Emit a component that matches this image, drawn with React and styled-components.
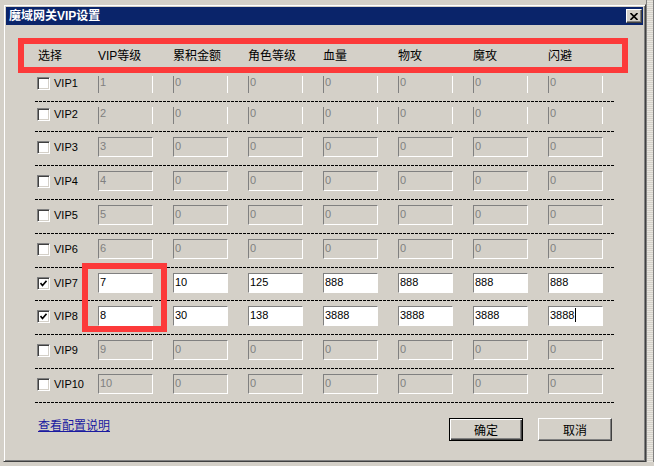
import React from "react";
import styled, { createGlobalStyle } from "styled-components";

const FACE = "#d4d0c8";
const RED = "#fc3a3a";

const GlobalStyle = createGlobalStyle`
  html, body { margin: 0; padding: 0; background: ${FACE}; }
  body {
    font-family: "Liberation Sans", "Noto Sans CJK SC", sans-serif;
    font-size: 12px;
    color: #000;
  }
  * { box-sizing: border-box; }
`;

const Desktop = styled.div`
  width: 654px;
  height: 466px;
  overflow: hidden;
  display: flex;
  align-items: flex-start;
  padding: 4px 0 0 3px;
  background: ${FACE};
`;

const SideStrip = styled.div`
  width: 8px;
  height: 462px;
  margin-top: -4px;
  border-left: 1px solid #808080;
  border-right: 1px solid #808080;
  background: repeating-linear-gradient(0deg, #e8e6e0 0 1px, ${FACE} 1px 2px);
`;

const Window = styled.div`
  width: 643px;
  height: 458px;
  flex: none;
  background: ${FACE};
  border: 1px solid;
  border-color: ${FACE} #404040 #404040 ${FACE};
  box-shadow: inset 1px 1px #fff, inset -1px -1px #808080;
  padding: 2px;
  display: flex;
  flex-direction: column;
`;

const TitleBar = styled.div`
  height: 18px;
  background: #0a246a;
  display: flex;
  align-items: center;
  justify-content: space-between;
  padding: 0 1px 0 3px;
`;

const Title = styled.div`
  color: #fff;
  font-weight: bold;
  font-size: 12px;
  line-height: 18px;
`;

const CloseButton = styled.div`
  width: 16px;
  height: 14px;
  background: ${FACE};
  border: 1px solid;
  border-color: #fff #404040 #404040 #fff;
  box-shadow: inset -1px -1px #808080;
  display: flex;
  align-items: center;
  justify-content: center;
`;

const Body = styled.div`
  flex: 1;
  display: flex;
  flex-direction: column;
  padding-top: 13px;
`;

const HeaderBox = styled.div`
  margin-left: 12px;
  width: 610px;
  height: 35px;
  border: 6px solid ${RED};
  display: grid;
  grid-template-columns: 60px repeat(7, 75px);
  align-items: center;
  padding-left: 14px;
`;

const HeaderCell = styled.div`
  font-size: 12px;
  line-height: 14px;
  white-space: nowrap;
`;

const Rows = styled.div`
  margin-left: 29px;
  width: 579px;
  position: relative;
`;

const Row = styled.div`
  display: grid;
  grid-template-columns: 63px repeat(6, 75px) 66px;
  align-items: start;
  height: ${(p) => p.$h}px;
  padding-top: ${(p) => p.$pad}px;
  background-image: repeating-linear-gradient(90deg, #000 0 3px, transparent 3px 4px);
  background-size: 100% 1px;
  background-position: left bottom;
  background-repeat: no-repeat;
`;

const Choice = styled.div`
  display: flex;
  align-items: center;
  gap: 4px;
  padding-left: 2px;
  height: ${(p) => (p.$compact ? 15 : 20)}px;
`;

const Box = styled.span`
  width: 13px;
  height: 13px;
  flex: none;
  background: #fff;
  border: 1px solid;
  border-color: #808080 #fff #fff #808080;
  box-shadow: inset 1px 1px #404040, inset -1px -1px ${FACE};
  display: flex;
  align-items: center;
  justify-content: center;
`;

const RowLabel = styled.span`
  font-size: 11px;
  line-height: 13px;
`;

const Field = styled.div`
  width: 55px;
  height: ${(p) => (p.$compact ? 17 : 20)}px;
  border-style: solid;
  border-color: #808080 #fff #fff #808080;
  border-width: ${(p) => (p.$compact ? "0 1px" : "1px")};
  background: ${(p) => (p.$enabled ? "#fff" : FACE)};
  color: ${(p) => (p.$enabled ? "#000" : "#808080")};
  font-size: 11px;
  line-height: ${(p) => (p.$compact ? 13 : 17)}px;
  padding-left: 1px;
  white-space: nowrap;
  overflow: hidden;
`;

const Caret = styled.span`
  display: inline-block;
  width: 1px;
  height: 14px;
  background: #000;
  vertical-align: middle;
  margin-left: 1px;
  margin-top: -2px;
`;

const Highlight = styled.div`
  position: absolute;
  left: 47px;
  top: 190px;
  width: 85px;
  height: 69px;
  border: 6px solid ${RED};
  pointer-events: none;
`;

const Footer = styled.div`
  display: flex;
  justify-content: space-between;
  align-items: flex-start;
  margin-top: 15px;
  padding: 0 31px 0 32px;
`;

const LinkText = styled.a`
  color: #1a1aa0;
  text-decoration: underline;
  font-size: 12px;
  line-height: 14px;
  margin-top: 1px;
  cursor: pointer;
`;

const Buttons = styled.div`
  display: flex;
  gap: 15px;
`;

const Button = styled.div`
  width: 74px;
  height: 23px;
  background: ${FACE};
  display: flex;
  align-items: center;
  justify-content: center;
  font-size: 12px;
  border: 1px solid;
  border-color: ${(p) => (p.$default ? "#000" : "#fff #404040 #404040 #fff")};
  box-shadow: ${(p) =>
    p.$default
      ? "inset 1px 1px #fff, inset -1px -1px #404040, inset -2px -2px #808080"
      : `inset -1px -1px #808080, inset 1px 1px ${FACE}`};
`;

const headers = ["选择", "VIP等级", "累积金额", "角色等级", "血量", "物攻", "魔攻", "闪避"];

const rows = [
  { n: 1, h: 29, pad: 3, compact: true },
  { n: 2, h: 30, pad: 5, compact: true },
  { n: 3, h: 34, pad: 5 },
  { n: 4, h: 34, pad: 5 },
  { n: 5, h: 34, pad: 5 },
  { n: 6, h: 34, pad: 5 },
  { n: 7, h: 33, pad: 5, on: true, vals: ["7", "10", "125", "888", "888", "888", "888"] },
  { n: 8, h: 34, pad: 5, on: true, vals: ["8", "30", "138", "3888", "3888", "3888", "3888"], caret: true },
  { n: 9, h: 34, pad: 5 },
  { n: 10, h: 34, pad: 5 },
];

const Check = () => (
  <svg width="7" height="7" viewBox="0 0 7 7">
    <path d="M0.5 3 L2.5 5.5 L6.5 0.8" fill="none" stroke="#000" strokeWidth="1.6" />
  </svg>
);

const CloseGlyph = () => (
  <svg width="8" height="7" viewBox="0 0 8 7">
    <path d="M0.5 0 L7.5 7 M7.5 0 L0.5 7" stroke="#000" strokeWidth="1.6" />
  </svg>
);

export default function App() {
  return (
    <>
      <GlobalStyle />
      <Desktop>
        <Window>
          <TitleBar>
            <Title>魔域网关VIP设置</Title>
            <CloseButton>
              <CloseGlyph />
            </CloseButton>
          </TitleBar>
          <Body>
            <HeaderBox>
              {headers.map((h) => (
                <HeaderCell key={h}>{h}</HeaderCell>
              ))}
            </HeaderBox>
            <Rows>
              {rows.map((r) => {
                const vals = r.vals || [String(r.n), "0", "0", "0", "0", "0", "0"];
                return (
                  <Row key={r.n} $h={r.h} $pad={r.pad}>
                    <Choice $compact={r.compact}>
                      <Box>{r.on && <Check />}</Box>
                      <RowLabel>VIP{r.n}</RowLabel>
                    </Choice>
                    {vals.map((v, i) => (
                      <Field key={i} $enabled={r.on} $compact={r.compact}>
                        {v}
                        {r.caret && i === vals.length - 1 && <Caret />}
                      </Field>
                    ))}
                  </Row>
                );
              })}
              <Highlight />
            </Rows>
            <Footer>
              <LinkText>查看配置说明</LinkText>
              <Buttons>
                <Button $default>确定</Button>
                <Button>取消</Button>
              </Buttons>
            </Footer>
          </Body>
        </Window>
        <SideStrip />
      </Desktop>
    </>
  );
}
